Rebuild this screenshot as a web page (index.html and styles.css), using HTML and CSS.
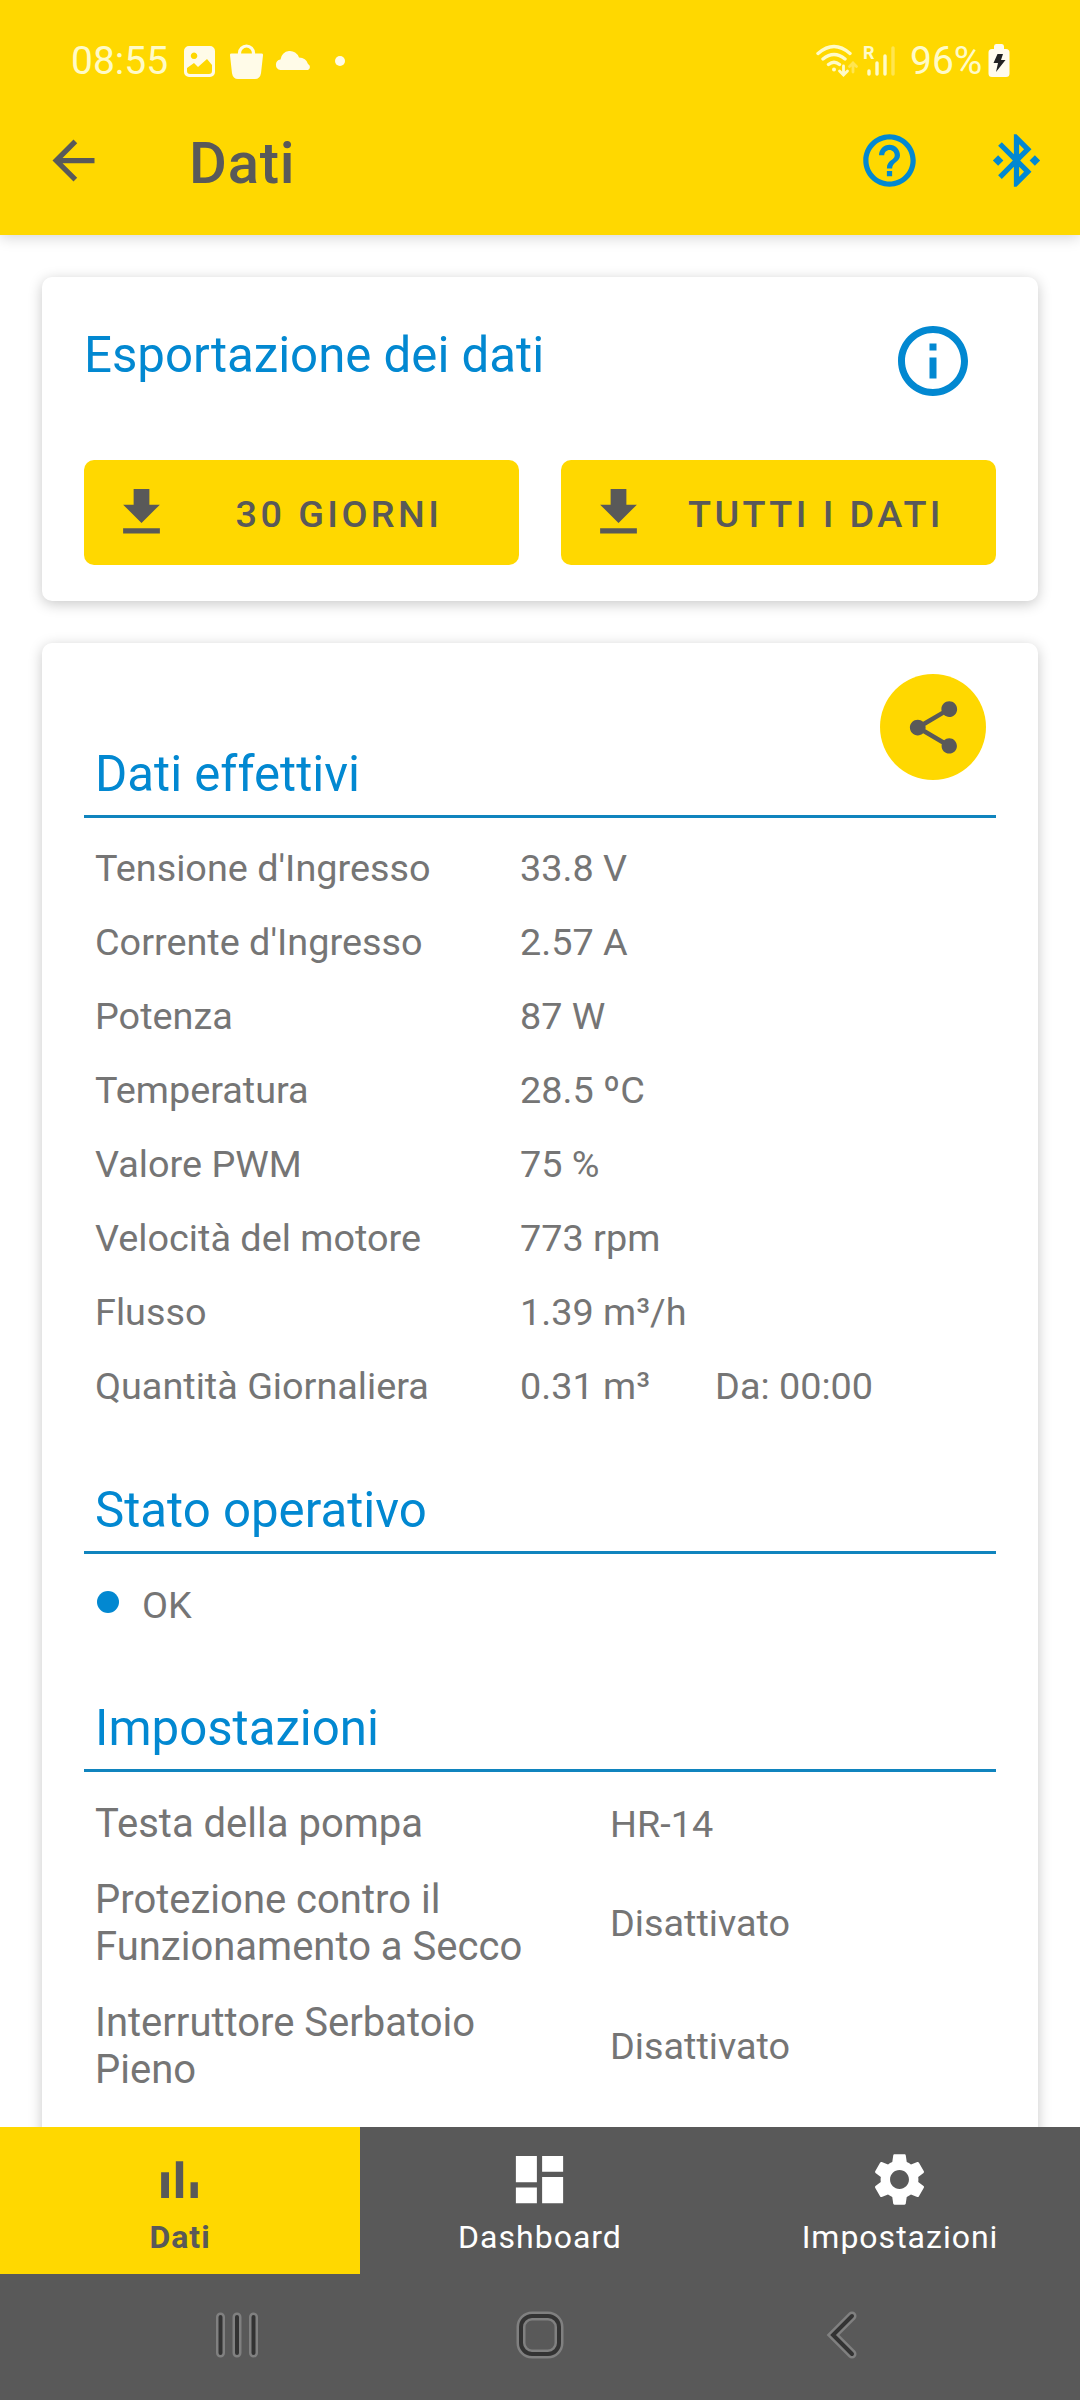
FILE: index.html
```html
<!DOCTYPE html>
<html lang="it">
<head>
    <meta charset="UTF-8">
    <meta name="viewport" content="width=device-width, initial-scale=1.0">
    <title>Dati</title>
    <link rel="stylesheet" href="styles.css">
</head>
<body>
    <header class="header">
        <div class="status-bar">
            <span class="clock">08:55</span>
            <svg class="status-left" width="164" height="40" viewBox="182 41 164 40" fill="#fffbe8">
                <path fill-rule="evenodd" d="M189 46h21a5 5 0 0 1 5 5v21a5 5 0 0 1-5 5h-21a5 5 0 0 1-5-5v-21a5 5 0 0 1 5-5zM187 68v3a3 3 0 0 0 3 3h19a3 3 0 0 0 3-3v-6l-5-6-9 8-4-4zM194 52.500a3.300 3.300 0 1 0 .1 0z"/>
                <path d="M231.500 53.500h30a1.500 1.500 0 0 1 1.500 1.700l-2 18q-1 5.800-6 5.800h-17q-5 0-6-5.800l-2-18a1.500 1.500 0 0 1 1.500-1.700z"/>
                <path d="M239.500 55v-2a7 7 0 0 1 14 0v2" fill="none" stroke="#fffbe8" stroke-width="3.200"/>
                <path d="M280.500 70a5.300 5.300 0 0 1 0-10.500a9.500 9.500 0 0 1 18.500-2q7 0 9 6.500a3.300 3.300 0 0 1 0 6z"/>
                <circle cx="340" cy="61" r="5"/>
            </svg>
            <svg class="status-right" width="82" height="40" viewBox="814 41 82 40" fill="none" stroke="#fffbc8" stroke-width="3.400" stroke-linecap="round">
                <path d="M818 53.500q16-14 32 0M823 59q11-9 22 0M828.500 64.500q5.500-4.500 11 0"/>
                <circle cx="834" cy="69.500" r="2" fill="#fffbc8" stroke="none"/>
                <path d="M843.500 66v8M839.500 71l4 4 4-4" stroke-width="2.800"/>
                <path d="M853 72v-9M849.500 66.500l3.500-3.500 3.500 3.500" stroke-width="2.800" opacity=".4"/>
                <path d="M869 71v3M877 63v11M885 56v18"/>
                <path d="M893 48v26" opacity=".4"/>
                <text class="roaming" x="863" y="58.500">R</text>
            </svg>
            <span class="battery-level">96%</span>
            <svg class="battery" width="22" height="34" viewBox="0 0 22 34">
                <path d="M6 5V2.500Q6 0 8 0h6q2 0 2 2.500V5h2q3.500 0 3.500 3.500v21q0 3.500-3.500 3.500H4Q.5 33 .5 29.500v-21Q.5 5 4 5z" fill="#fffbee"/>
                <path d="M9.500 10h5.500l-2 6h4.500L8 28l2-9H5.500z" fill="#222"/>
            </svg>
        </div>
        <div class="toolbar">
            <svg class="icon back" viewBox="0 0 24 24"><path d="M20 11H7.830l5.590-5.590L12 4l-8 8 8 8 1.410-1.410L7.830 13H20v-2z"/></svg>
            <h1>Dati</h1>
            <svg class="icon blue help" viewBox="0 0 24 24"><path d="M11 18h2v-2h-2v2zm1-16C6.480 2 2 6.480 2 12s4.480 10 10 10 10-4.480 10-10S17.520 2 12 2zm0 18c-4.410 0-8-3.590-8-8s3.590-8 8-8 8 3.590 8 8-3.590 8-8 8zm0-14c-2.210 0-4 1.790-4 4h2c0-1.100.9-2 2-2s2 .9 2 2c0 2-3 1.750-3 5h2c0-2.250 3-2.500 3-5 0-2.210-1.790-4-4-4z"/></svg>
            <svg class="icon blue" viewBox="0 0 24 24"><path d="M7 12l-2-2-2 2 2 2 2-2zm10.710-4.290L12 2h-1v7.590L6.410 5 5 6.410 10.590 12 5 17.590 6.410 19 11 14.410V22h1l5.710-5.710-4.300-4.290 4.300-4.290zM13 5.830l1.880 1.880L13 9.590V5.830zm1.880 10.460L13 18.170v-3.760l1.880 1.880zM19 10l-2 2 2 2 2-2-2-2z"/></svg>
        </div>
    </header>

    <main class="content">
        <section class="card export">
            <div class="export-head">
                <h2>Esportazione dei dati</h2>
                <svg class="icon blue info" viewBox="0 0 24 24"><path d="M11 7h2v2h-2zm0 4h2v6h-2zm1-9C6.480 2 2 6.480 2 12s4.480 10 10 10 10-4.480 10-10S17.520 2 12 2zm0 18c-4.410 0-8-3.590-8-8s3.590-8 8-8 8 3.590 8 8-3.590 8-8 8z"/></svg>
            </div>
            <div class="buttons">
                <button class="btn">
                    <svg class="icon" viewBox="0 0 24 24"><path d="M19 9h-4V3H9v6H5l7 7 7-7zM5 18v2h14v-2H5z"/></svg>
                    <span>30 GIORNI</span>
                </button>
                <button class="btn">
                    <svg class="icon" viewBox="0 0 24 24"><path d="M19 9h-4V3H9v6H5l7 7 7-7zM5 18v2h14v-2H5z"/></svg>
                    <span>TUTTI I DATI</span>
                </button>
            </div>
        </section>

        <section class="card data">
            <div class="share">
                <svg class="icon" viewBox="0 0 24 24"><path d="M18 16.080c-.76 0-1.440.3-1.960.77L8.910 12.700c.05-.23.09-.46.09-.7s-.04-.47-.09-.7l7.050-4.110c.54.5 1.250.81 2.040.81 1.660 0 3-1.340 3-3s-1.340-3-3-3-3 1.340-3 3c0 .24.04.47.09.7L8.040 9.810C7.500 9.310 6.790 9 6 9c-1.660 0-3 1.340-3 3s1.340 3 3 3c.79 0 1.500-.31 2.040-.81l7.120 4.160c-.05.21-.08.43-.08.65 0 1.610 1.310 2.920 2.920 2.920s2.920-1.310 2.920-2.920-1.310-2.920-2.920-2.920z"/></svg>
            </div>

            <h2 class="section-title">Dati effettivi</h2>
            <dl class="values">
                <dt>Tensione d'Ingresso</dt><dd>33.8 V</dd>
                <dt>Corrente d'Ingresso</dt><dd>2.57 A</dd>
                <dt>Potenza</dt><dd>87 W</dd>
                <dt>Temperatura</dt><dd>28.5 ºC</dd>
                <dt>Valore PWM</dt><dd>75 %</dd>
                <dt>Velocità del motore</dt><dd>773 rpm</dd>
                <dt>Flusso</dt><dd>1.39 m³/h</dd>
                <dt>Quantità Giornaliera</dt><dd>0.31 m³<span class="since">Da: 00:00</span></dd>
            </dl>

            <h2 class="section-title">Stato operativo</h2>
            <div class="state"><span class="dot"></span>OK</div>

            <h2 class="section-title">Impostazioni</h2>
            <dl class="settings">
                <dt>Testa della pompa</dt><dd>HR-14</dd>
                <dt>Protezione contro il Funzionamento a Secco</dt><dd>Disattivato</dd>
                <dt>Interruttore Serbatoio Pieno</dt><dd>Disattivato</dd>
            </dl>
        </section>
    </main>

    <nav class="tabs">
        <div class="tab active">
            <svg class="icon" viewBox="0 0 24 24"><path d="M5 9.200h3V19H5zM10.600 5h2.800v14h-2.800zm5.600 8H19v6h-2.800z"/></svg>
            <span>Dati</span>
        </div>
        <div class="tab">
            <svg class="icon" viewBox="0 0 24 24"><path d="M3 13h8V3H3v10zm0 8h8v-6H3v6zm10 0h8V11h-8v10zm0-18v6h8V3h-8z"/></svg>
            <span>Dashboard</span>
        </div>
        <div class="tab">
            <svg class="icon" viewBox="0 0 24 24"><path d="M19.140 12.940c.04-.3.06-.61.06-.94 0-.32-.02-.64-.07-.94l2.030-1.580c.18-.14.23-.41.12-.61l-1.920-3.320c-.12-.22-.37-.29-.59-.22l-2.390.96c-.5-.38-1.030-.7-1.620-.94l-.36-2.540c-.04-.24-.24-.41-.48-.41h-3.840c-.24 0-.43.17-.47.41l-.36 2.540c-.59.24-1.130.57-1.620.94l-2.390-.96c-.22-.08-.47 0-.59.22L2.740 8.870c-.12.21-.08.47.12.61l2.030 1.580c-.05.3-.09.63-.09.94s.02.64.07.94l-2.030 1.580c-.18.14-.23.41-.12.61l1.920 3.320c.12.22.37.29.59.22l2.390-.96c.5.38 1.030.7 1.620.94l.36 2.540c.05.24.24.41.48.41h3.840c.24 0 .44-.17.47-.41l.36-2.540c.59-.24 1.130-.56 1.620-.94l2.390.96c.22.08.47 0 .59-.22l1.920-3.320c.12-.22.07-.47-.12-.61l-2.010-1.580zM12 15.600c-1.980 0-3.600-1.620-3.600-3.600s1.620-3.600 3.600-3.600 3.600 1.620 3.600 3.600-1.620 3.600-3.600 3.600z"/></svg>
            <span>Impostazioni</span>
        </div>
    </nav>

    <footer class="system-nav">
        <svg viewBox="0 0 60 60"><g class="outer"><path d="M13.500 12v36M30 12v36M46.500 12v36"/></g><g class="inner"><path d="M13.500 12v36M30 12v36M46.500 12v36"/></g></svg>
        <svg viewBox="0 0 60 60"><rect class="outer" x="11" y="11" width="38" height="38" rx="11"/><rect class="inner" x="11" y="11" width="38" height="38" rx="11"/></svg>
        <svg viewBox="0 0 60 60"><path class="outer" d="M40 11L21 30l19 19"/><path class="inner" d="M40 11L21 30l19 19"/></svg>
    </footer>
</body>
</html>
```
FILE: styles.css
```css
* {
    box-sizing: border-box;
}
body {
    margin: 0;
    height: 2400px;
    display: flex;
    flex-direction: column;
    overflow: hidden;
    background: #fff;
    font-family: Roboto, sans-serif;
    color: #757575;
}
h1, h2, dl, dd {
    margin: 0;
}
svg {
    display: block;
    flex: none;
}
.icon {
    width: 63px;
    height: 63px;
    fill: #595959;
}
.blue {
    fill: #0288d1;
}

/* header */
.header {
    height: 235px;
    flex: none;
    background: #ffd800;
    box-shadow: 0 2px 14px rgba(0, 0, 0, 0.18);
    z-index: 1;
}
.status-bar {
    height: 122px;
    display: flex;
    align-items: center;
    padding: 0 70px 0 71px;
    font-size: 39px;
    color: #fffbc8;
}
.clock {
    width: 111px;
}
.status-right {
    margin-left: auto;
}
.roaming {
    font-size: 18px;
    font-weight: 700;
    fill: #fffbc8;
    stroke: none;
}
.battery-level {
    margin-left: 14px;
    width: 78px;
}
.toolbar {
    height: 77px;
    display: flex;
    align-items: center;
    padding: 0 32px 0 42px;
}
.toolbar h1 {
    margin-left: 84px;
    padding-top: 5px;
    font-size: 58px;
    font-weight: 500;
    letter-spacing: 0.8px;
    color: #595959;
}
.help {
    margin-left: auto;
    margin-right: 64px;
}

/* cards */
.content {
    flex: 1;
    min-height: 0;
    overflow: hidden;
    padding: 42px;
}
.card {
    background: #fff;
    border-radius: 10px;
    box-shadow: 0 3px 14px rgba(0, 0, 0, 0.22);
    padding: 0 42px;
}
.card h2 {
    font-size: 49.200px;
    font-weight: 400;
    line-height: 58px;
    color: #0288d1;
}
.export {
    height: 324px;
    padding-top: 42px;
    margin-bottom: 42px;
}
.export-head {
    height: 141px;
    display: flex;
    justify-content: space-between;
    padding-right: 21px;
}
.export-head h2 {
    margin-top: 7px;
}
.info {
    width: 84px;
    height: 84px;
}
.buttons {
    display: grid;
    grid-template-columns: 1fr 1fr;
    gap: 42px;
}
.btn {
    height: 105px;
    display: flex;
    align-items: center;
    border: 0;
    border-radius: 10px;
    background: #ffd800;
    padding: 0 14px 0 26px;
    font: 500 37.800px Roboto, sans-serif;
    letter-spacing: 3.400px;
    color: #595959;
}
.btn span {
    flex: 1;
    padding-top: 2px;
    text-align: center;
}
.data {
    position: relative;
    height: 1600px;
    padding-top: 101px;
}
.share {
    position: absolute;
    top: 31px;
    right: 52px;
    width: 106px;
    height: 106px;
    display: flex;
    align-items: center;
    justify-content: center;
    border-radius: 50%;
    background: #ffd800;
}
.section-title {
    height: 74px;
    padding: 1px 0 0 11px;
    border-bottom: 3px solid #1084be;
}

/* value lists */
.values, .settings {
    display: grid;
    padding-left: 11px;
    font-size: 37.800px;
    line-height: 44px;
}
.values {
    grid-template-columns: 425px 1fr;
    grid-auto-rows: 74px;
    align-items: center;
    padding-top: 13px;
    margin-bottom: 57px;
}
.since {
    margin-left: 65px;
}
.state {
    height: 144px;
    display: flex;
    align-items: flex-start;
    padding: 29px 0 0 13px;
    font-size: 37.800px;
    line-height: 44px;
}
.dot {
    width: 22px;
    height: 22px;
    margin: 8px 23px 0 0;
    border-radius: 50%;
    background: #0288d1;
}
.settings {
    grid-template-columns: 515px 1fr;
    align-items: center;
    padding-top: 28px;
    row-gap: 29px;
}
.settings dt {
    max-width: 440px;
    font-size: 40px;
    line-height: 47px;
}

/* bottom navigation */
.tabs {
    height: 147px;
    flex: none;
    display: grid;
    grid-template-columns: repeat(3, 1fr);
    background: #595959;
}
.tab {
    display: flex;
    flex-direction: column;
    align-items: center;
    padding: 21px 1px 0 0;
    font-size: 32px;
    line-height: 38px;
    letter-spacing: 1px;
    color: #fff;
}
.tab span {
    margin: 7px -1px 0 0;
}
.tab .icon {
    fill: #fff;
}
.tab.active {
    background: #ffd800;
    font-weight: 700;
    color: #595959;
}
.tab.active .icon {
    fill: #595959;
}
.system-nav {
    height: 126px;
    flex: none;
    display: flex;
    align-items: center;
    justify-content: space-between;
    padding: 0 208px 5px 207px;
    background: #595959;
}
.system-nav svg {
    width: 60px;
    height: 60px;
    fill: none;
    stroke-linecap: round;
}
.outer {
    stroke: #808080;
    stroke-width: 9;
}
.inner {
    stroke: #333;
    stroke-width: 4;
}
```
